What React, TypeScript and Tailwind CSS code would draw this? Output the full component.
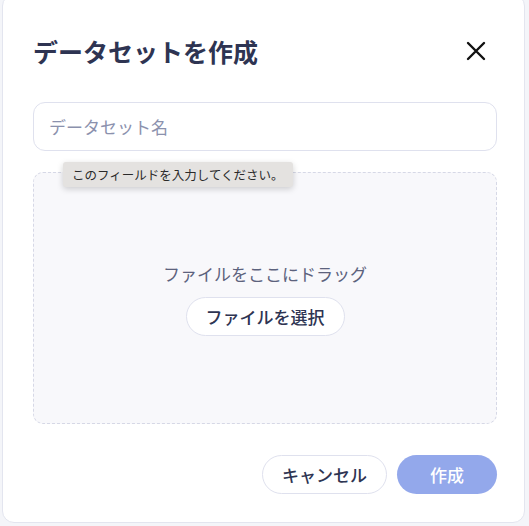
const jp = { fontFamily: '"Noto Sans CJK JP", "Noto Sans", sans-serif' };

function CloseIcon() {
  return (
    <svg width="20" height="20" viewBox="0 0 20 20" fill="none" aria-hidden>
      <path d="M2 2 L18 18 M18 2 L2 18" stroke="#111" strokeWidth="2.4" strokeLinecap="round" />
    </svg>
  );
}

export default function App() {
  return (
    <div className="h-[526px] w-[529px] overflow-hidden bg-[#f4f5f9]" style={jp}>
      <div className="-mt-[6px] ml-[2px] flex h-[529px] w-[523px] flex-col rounded-[12px] border border-[#e3e5ef] bg-white pt-[40px] pr-[27px] pb-[28px] pl-[30px]">
        {/* header */}
        <div className="flex h-[32px] items-center justify-between">
          <h2 className="text-[25px] leading-[32px] font-bold text-[#2e3452]">データセットを作成</h2>
          <button className="mr-[9px] flex h-[24px] w-[24px] items-center justify-center">
            <CloseIcon />
          </button>
        </div>

        {/* name input */}
        <div className="relative mt-[35px]">
          <input
            placeholder="データセット名"
            className="h-[49px] w-full rounded-[12px] border border-[#dfe1ee] bg-white px-[15px] text-[17px] text-[#2e3452] outline-none placeholder:text-[#8b91ad]"
          />
          <div className="absolute top-[60px] left-[30px] z-10 rounded-[3px] bg-[#e4e2e0] px-[9px] py-[4px] text-[12.5px] leading-[17px] text-[#2a2a2a] shadow-[0_2px_6px_rgba(0,0,0,0.18)]">
            このフィールドを入力してください。
          </div>
        </div>

        {/* drop zone */}
        <div className="mt-[21px] flex h-[252px] flex-col items-center justify-center rounded-[10px] border border-dashed border-[#d6d8e6] bg-[#f8f8fb] pt-[2px]">
          <p className="text-[17px] leading-[24px] text-[#5c627d]">ファイルをここにドラッグ</p>
          <button className="mt-[11px] h-[39px] rounded-full border border-[#dfe1ee] bg-white px-[19px] text-[17px] font-medium text-[#2e3452]">
            ファイルを選択
          </button>
        </div>

        {/* footer */}
        <div className="mt-auto flex justify-end gap-[10px]">
          <button className="h-[39px] w-[125px] rounded-full border border-[#dfe1ee] bg-white text-[17px] font-medium text-[#2e3452]">
            キャンセル
          </button>
          <button className="h-[39px] w-[100px] rounded-full bg-[#93a8eb] text-[17px] font-medium text-white">
            作成
          </button>
        </div>
      </div>
    </div>
  );
}
